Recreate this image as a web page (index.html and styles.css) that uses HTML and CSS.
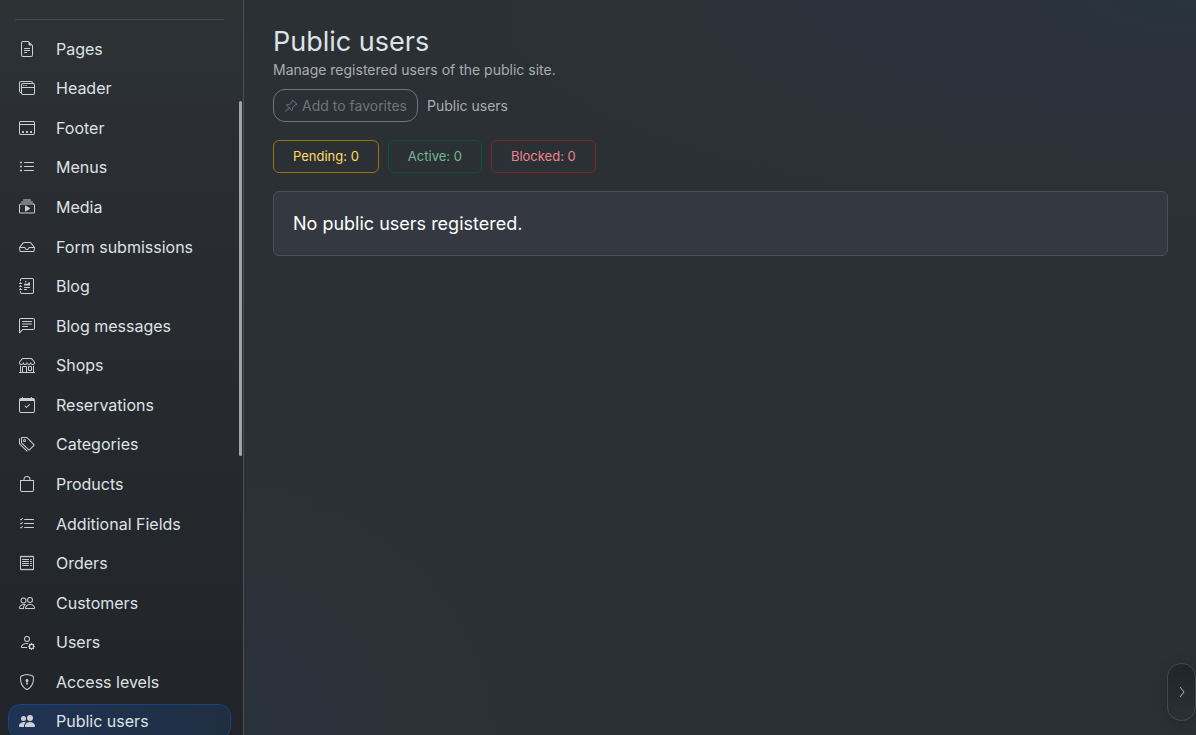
FILE: index.html
```html
<!DOCTYPE html>
<html lang="en">
<head>
    <meta charset="UTF-8">
    <meta name="viewport" content="width=device-width, initial-scale=1.0">
    <title>Public users</title>
    <link rel="stylesheet" href="styles.css">
</head>
<body>
<div class="layout">
    <aside class="sidebar">
        <hr class="sidebar__line">
        <nav class="menu">
            <a class="menu__item" href="#pages">
                <svg class="icon" viewBox="0 0 16 16"><path d="M5.5 7a.5.5 0 0 0 0 1h5a.5.5 0 0 0 0-1zM5 9.5a.5.5 0 0 1 .5-.5h5a.5.5 0 0 1 0 1h-5a.5.5 0 0 1-.5-.5m0 2a.5.5 0 0 1 .5-.5h2a.5.5 0 0 1 0 1h-2a.5.5 0 0 1-.5-.5"/><path d="M9.5 0H4a2 2 0 0 0-2 2v12a2 2 0 0 0 2 2h8a2 2 0 0 0 2-2V4.5zm0 1v2A1.5 1.5 0 0 0 11 4.5h2V14a1 1 0 0 1-1 1H4a1 1 0 0 1-1-1V2a1 1 0 0 1 1-1z"/></svg>
                <span>Pages</span>
            </a>
            <a class="menu__item" href="#header">
                <svg class="icon" viewBox="0 0 16 16"><path d="M4.5 6a.5.5 0 1 0 0-1 .5.5 0 0 0 0 1M6 6a.5.5 0 1 0 0-1 .5.5 0 0 0 0 1m2-.5a.5.5 0 1 1-1 0 .5.5 0 0 1 1 0"/><path d="M12 1a2 2 0 0 1 2 2 2 2 0 0 1 2 2v8a2 2 0 0 1-2 2H4a2 2 0 0 1-2-2 2 2 0 0 1-2-2V3a2 2 0 0 1 2-2zM2 12V5a2 2 0 0 1 2-2h9a1 1 0 0 0-1-1H2a1 1 0 0 0-1 1v8a1 1 0 0 0 1 1m1-4v5a1 1 0 0 0 1 1h10a1 1 0 0 0 1-1V8zm12-1V5a1 1 0 0 0-1-1H4a1 1 0 0 0-1 1v2z"/></svg>
                <span>Header</span>
            </a>
            <a class="menu__item" href="#footer">
                <svg class="icon" viewBox="0 0 16 16"><path d="M3.5 11a.5.5 0 0 0-.5.5v1a.5.5 0 0 0 .5.5h1a.5.5 0 0 0 .5-.5v-1a.5.5 0 0 0-.5-.5zm3.5.5a.5.5 0 0 1 .5-.5h1a.5.5 0 0 1 .5.5v1a.5.5 0 0 1-.5.5h-1a.5.5 0 0 1-.5-.5zm4.5-.5a.5.5 0 0 0-.5.5v1a.5.5 0 0 0 .5.5h1a.5.5 0 0 0 .5-.5v-1a.5.5 0 0 0-.5-.5z"/><path d="M14 1a2 2 0 0 1 2 2v10a2 2 0 0 1-2 2H2a2 2 0 0 1-2-2V3a2 2 0 0 1 2-2zM2 14h12a1 1 0 0 0 1-1V5H1v8a1 1 0 0 0 1 1M2 2a1 1 0 0 0-1 1v1h14V3a1 1 0 0 0-1-1z"/></svg>
                <span>Footer</span>
            </a>
            <a class="menu__item" href="#menus">
                <svg class="icon" viewBox="0 0 16 16"><path d="M5 11.5a.5.5 0 0 1 .5-.5h9a.5.5 0 0 1 0 1h-9a.5.5 0 0 1-.5-.5m0-4a.5.5 0 0 1 .5-.5h9a.5.5 0 0 1 0 1h-9a.5.5 0 0 1-.5-.5m0-4a.5.5 0 0 1 .5-.5h9a.5.5 0 0 1 0 1h-9a.5.5 0 0 1-.5-.5m-3 1a1 1 0 1 0 0-2 1 1 0 0 0 0 2m0 4a1 1 0 1 0 0-2 1 1 0 0 0 0 2m0 4a1 1 0 1 0 0-2 1 1 0 0 0 0 2"/></svg>
                <span>Menus</span>
            </a>
            <a class="menu__item" href="#media">
                <svg class="icon" viewBox="0 0 16 16"><path d="M2 3a.5.5 0 0 0 .5.5h11a.5.5 0 0 0 0-1h-11A.5.5 0 0 0 2 3m2-2a.5.5 0 0 0 .5.5h7a.5.5 0 0 0 0-1h-7A.5.5 0 0 0 4 1m2.765 5.576A.5.5 0 0 0 6 7v5a.5.5 0 0 0 .765.424l4-2.5a.5.5 0 0 0 0-.848z"/><path d="M1.5 14.5A1.5 1.5 0 0 1 0 13V6a1.5 1.5 0 0 1 1.5-1.5h13A1.5 1.5 0 0 1 16 6v7a1.5 1.5 0 0 1-1.5 1.5zm13-1a.5.5 0 0 0 .5-.5V6a.5.5 0 0 0-.5-.5h-13A.5.5 0 0 0 1 6v7a.5.5 0 0 0 .5.5z"/></svg>
                <span>Media</span>
            </a>
            <a class="menu__item" href="#forms">
                <svg class="icon" viewBox="0 0 16 16"><path d="M4.98 4a.5.5 0 0 0-.39.188L1.54 8H6a.5.5 0 0 1 .5.5 1.5 1.5 0 1 0 3 0A.5.5 0 0 1 10 8h4.46l-3.05-3.812A.5.5 0 0 0 11.02 4zm9.954 5H10.45a2.5 2.5 0 0 1-4.9 0H1.066l.32 2.562a.5.5 0 0 0 .497.438h12.234a.5.5 0 0 0 .496-.438zM3.809 3.563A1.5 1.5 0 0 1 4.981 3h6.038a1.5 1.5 0 0 1 1.172.563l3.7 4.625a.5.5 0 0 1 .105.374l-.39 3.124A1.5 1.5 0 0 1 14.117 13H1.883a1.5 1.5 0 0 1-1.489-1.314l-.39-3.124a.5.5 0 0 1 .106-.374z"/></svg>
                <span>Form submissions</span>
            </a>
            <a class="menu__item" href="#blog">
                <svg class="icon" viewBox="0 0 16 16"><path d="M7.5 3.75a.75.75 0 1 1-1.5 0 .75.75 0 0 1 1.5 0m-.861 1.542 1.33.886 1.854-1.855a.25.25 0 0 1 .289-.047L11 4.75V7a.5.5 0 0 1-.5.5h-5A.5.5 0 0 1 5 7v-.5s1.54-1.274 1.639-1.208M5 9.5a.5.5 0 0 1 .5-.5h5a.5.5 0 0 1 0 1h-5a.5.5 0 0 1-.5-.5m0 2a.5.5 0 0 1 .5-.5h2a.5.5 0 0 1 0 1h-2a.5.5 0 0 1-.5-.5"/><path d="M3 0h10a2 2 0 0 1 2 2v12a2 2 0 0 1-2 2H3a2 2 0 0 1-2-2v-1h1v1a1 1 0 0 0 1 1h10a1 1 0 0 0 1-1V2a1 1 0 0 0-1-1H3a1 1 0 0 0-1 1v1H1V2a2 2 0 0 1 2-2"/><path d="M1 5v-.5a.5.5 0 0 1 1 0V5h.5a.5.5 0 0 1 0 1h-2a.5.5 0 0 1 0-1zm0 3v-.5a.5.5 0 0 1 1 0V8h.5a.5.5 0 0 1 0 1h-2a.5.5 0 0 1 0-1zm0 3v-.5a.5.5 0 0 1 1 0v.5h.5a.5.5 0 0 1 0 1h-2a.5.5 0 0 1 0-1z"/></svg>
                <span>Blog</span>
            </a>
            <a class="menu__item" href="#messages">
                <svg class="icon" viewBox="0 0 16 16"><path d="M14 1a1 1 0 0 1 1 1v8a1 1 0 0 1-1 1H4.414A2 2 0 0 0 3 11.586l-2 2V2a1 1 0 0 1 1-1zM2 0a2 2 0 0 0-2 2v12.793a.5.5 0 0 0 .854.353l2.853-2.853A1 1 0 0 1 4.414 12H14a2 2 0 0 0 2-2V2a2 2 0 0 0-2-2z"/><path d="M3 3.5a.5.5 0 0 1 .5-.5h9a.5.5 0 0 1 0 1h-9a.5.5 0 0 1-.5-.5M3 6a.5.5 0 0 1 .5-.5h9a.5.5 0 0 1 0 1h-9A.5.5 0 0 1 3 6m0 2.5a.5.5 0 0 1 .5-.5h5a.5.5 0 0 1 0 1h-5a.5.5 0 0 1-.5-.5"/></svg>
                <span>Blog messages</span>
            </a>
            <a class="menu__item" href="#shops">
                <svg class="icon" viewBox="0 0 16 16"><path d="M2.97 1.35A1 1 0 0 1 3.73 1h8.54a1 1 0 0 1 .76.35l2.609 3.044A1.5 1.5 0 0 1 16 5.37v.255a2.375 2.375 0 0 1-4.25 1.458A2.37 2.37 0 0 1 9.875 8 2.37 2.37 0 0 1 8 7.083 2.37 2.37 0 0 1 6.125 8a2.37 2.37 0 0 1-1.875-.917A2.375 2.375 0 0 1 0 5.625V5.37a1.5 1.5 0 0 1 .361-.976zm1.78 4.275a1.375 1.375 0 0 0 2.75 0 .5.5 0 0 1 1 0 1.375 1.375 0 0 0 2.75 0 .5.5 0 0 1 1 0 1.375 1.375 0 1 0 2.75 0V5.37a.5.5 0 0 0-.12-.325L12.27 2H3.73L1.12 5.045A.5.5 0 0 0 1 5.37v.255a1.375 1.375 0 0 0 2.75 0 .5.5 0 0 1 1 0M1.5 8.5A.5.5 0 0 1 2 9v6h1v-5a1 1 0 0 1 1-1h3a1 1 0 0 1 1 1v5h6V9a.5.5 0 0 1 1 0v6h.5a.5.5 0 0 1 0 1H.5a.5.5 0 0 1 0-1H1V9a.5.5 0 0 1 .5-.5M4 15h3v-5H4zm5-5a1 1 0 0 1 1-1h2a1 1 0 0 1 1 1v3a1 1 0 0 1-1 1h-2a1 1 0 0 1-1-1zm3 0h-2v3h2z"/></svg>
                <span>Shops</span>
            </a>
            <a class="menu__item" href="#reservations">
                <svg class="icon" viewBox="0 0 16 16"><path d="M10.854 7.146a.5.5 0 0 1 0 .708l-3 3a.5.5 0 0 1-.708 0l-1.5-1.5a.5.5 0 1 1 .708-.708L7.5 9.793l2.646-2.647a.5.5 0 0 1 .708 0"/><path d="M3.5 0a.5.5 0 0 1 .5.5V1h8V.5a.5.5 0 0 1 1 0V1h1a2 2 0 0 1 2 2v11a2 2 0 0 1-2 2H2a2 2 0 0 1-2-2V3a2 2 0 0 1 2-2h1V.5a.5.5 0 0 1 .5-.5M1 4v10a1 1 0 0 0 1 1h12a1 1 0 0 0 1-1V4z"/></svg>
                <span>Reservations</span>
            </a>
            <a class="menu__item" href="#categories">
                <svg class="icon" viewBox="0 0 16 16"><path d="M3 2v4.586l7 7L14.586 9l-7-7zM2 2a1 1 0 0 1 1-1h4.586a1 1 0 0 1 .707.293l7 7a1 1 0 0 1 0 1.414l-4.586 4.586a1 1 0 0 1-1.414 0l-7-7A1 1 0 0 1 2 6.586z"/><path d="M5.5 5a.5.5 0 1 1 0-1 .5.5 0 0 1 0 1m0 1a1.5 1.5 0 1 0 0-3 1.5 1.5 0 0 0 0 3M1 7.086a1 1 0 0 0 .293.707L8.75 15.25l-.043.043a1 1 0 0 1-1.414 0l-7-7A1 1 0 0 1 0 7.586V3a1 1 0 0 1 1-1z"/></svg>
                <span>Categories</span>
            </a>
            <a class="menu__item" href="#products">
                <svg class="icon" viewBox="0 0 16 16"><path d="M8 1a2.5 2.5 0 0 1 2.5 2.5V4h-5v-.5A2.5 2.5 0 0 1 8 1m3.5 3v-.5a3.5 3.5 0 1 0-7 0V4H1v10a2 2 0 0 0 2 2h10a2 2 0 0 0 2-2V4zM2 5h12v9a1 1 0 0 1-1 1H3a1 1 0 0 1-1-1z"/></svg>
                <span>Products</span>
            </a>
            <a class="menu__item" href="#fields">
                <svg class="icon" viewBox="0 0 16 16"><path d="M5 11.5a.5.5 0 0 1 .5-.5h9a.5.5 0 0 1 0 1h-9a.5.5 0 0 1-.5-.5m0-4a.5.5 0 0 1 .5-.5h9a.5.5 0 0 1 0 1h-9a.5.5 0 0 1-.5-.5m0-4a.5.5 0 0 1 .5-.5h9a.5.5 0 0 1 0 1h-9a.5.5 0 0 1-.5-.5M3.854 2.146a.5.5 0 0 1 0 .708l-1.5 1.5a.5.5 0 0 1-.708 0l-.5-.5a.5.5 0 1 1 .708-.708L2 3.293l1.146-1.147a.5.5 0 0 1 .708 0m0 4a.5.5 0 0 1 0 .708l-1.5 1.5a.5.5 0 0 1-.708 0l-.5-.5a.5.5 0 1 1 .708-.708l.146.147 1.146-1.147a.5.5 0 0 1 .708 0m0 4a.5.5 0 0 1 0 .708l-1.5 1.5a.5.5 0 0 1-.708 0l-.5-.5a.5.5 0 0 1 .708-.708l.146.147 1.146-1.147a.5.5 0 0 1 .708 0"/></svg>
                <span>Additional Fields</span>
            </a>
            <a class="menu__item" href="#orders">
                <svg class="icon" viewBox="0 0 16 16"><path d="M1.92.506a.5.5 0 0 1 .434.14L3 1.293l.646-.647a.5.5 0 0 1 .708 0L5 1.293l.646-.647a.5.5 0 0 1 .708 0L7 1.293l.646-.647a.5.5 0 0 1 .708 0L9 1.293l.646-.647a.5.5 0 0 1 .708 0l.646.647.646-.647a.5.5 0 0 1 .708 0l.646.647.646-.647a.5.5 0 0 1 .801.13l.5 1A.5.5 0 0 1 15 2v12a.5.5 0 0 1-.053.224l-.5 1a.5.5 0 0 1-.8.13L13 14.707l-.646.647a.5.5 0 0 1-.708 0L11 14.707l-.646.647a.5.5 0 0 1-.708 0L9 14.707l-.646.647a.5.5 0 0 1-.708 0L7 14.707l-.646.647a.5.5 0 0 1-.708 0L5 14.707l-.646.647a.5.5 0 0 1-.708 0L3 14.707l-.646.647a.5.5 0 0 1-.801-.13l-.5-1A.5.5 0 0 1 1 14V2a.5.5 0 0 1 .053-.224l.5-1a.5.5 0 0 1 .367-.27m.217 1.338L2 2.118v11.764l.137.274.51-.51a.5.5 0 0 1 .707 0l.646.647.646-.646a.5.5 0 0 1 .708 0l.646.646.646-.646a.5.5 0 0 1 .708 0l.646.646.646-.646a.5.5 0 0 1 .708 0l.646.646.646-.646a.5.5 0 0 1 .708 0l.646.646.646-.646a.5.5 0 0 1 .708 0l.509.509.137-.274V2.118l-.137-.274-.51.51a.5.5 0 0 1-.707 0L12 1.707l-.646.647a.5.5 0 0 1-.708 0L10 1.707l-.646.647a.5.5 0 0 1-.708 0L8 1.707l-.646.647a.5.5 0 0 1-.708 0L6 1.707l-.646.647a.5.5 0 0 1-.708 0L4 1.707l-.646.647a.5.5 0 0 1-.708 0z"/><path d="M3 4.5a.5.5 0 0 1 .5-.5h6a.5.5 0 1 1 0 1h-6a.5.5 0 0 1-.5-.5m0 2a.5.5 0 0 1 .5-.5h6a.5.5 0 1 1 0 1h-6a.5.5 0 0 1-.5-.5m0 2a.5.5 0 0 1 .5-.5h6a.5.5 0 1 1 0 1h-6a.5.5 0 0 1-.5-.5m0 2a.5.5 0 0 1 .5-.5h6a.5.5 0 0 1 0 1h-6a.5.5 0 0 1-.5-.5m8-6a.5.5 0 0 1 .5-.5h1a.5.5 0 0 1 0 1h-1a.5.5 0 0 1-.5-.5m0 2a.5.5 0 0 1 .5-.5h1a.5.5 0 0 1 0 1h-1a.5.5 0 0 1-.5-.5m0 2a.5.5 0 0 1 .5-.5h1a.5.5 0 0 1 0 1h-1a.5.5 0 0 1-.5-.5m0 2a.5.5 0 0 1 .5-.5h1a.5.5 0 0 1 0 1h-1a.5.5 0 0 1-.5-.5"/></svg>
                <span>Orders</span>
            </a>
            <a class="menu__item" href="#customers">
                <svg class="icon" viewBox="0 0 16 16"><path d="M15 14s1 0 1-1-1-4-5-4-5 3-5 4 1 1 1 1zm-7.978-1L7 12.996c.001-.264.167-1.03.76-1.72C8.312 10.629 9.282 10 11 10c1.717 0 2.687.63 3.24 1.276.593.69.758 1.457.76 1.72l-.008.002-.014.002zM11 7a2 2 0 1 0 0-4 2 2 0 0 0 0 4m3-2a3 3 0 1 1-6 0 3 3 0 0 1 6 0M6.936 9.28a6 6 0 0 0-1.23-.247A7 7 0 0 0 5 9c-4 0-5 3-5 4q0 1 1 1h4.216A2.24 2.24 0 0 1 5 13c0-1.01.377-2.042 1.09-2.904.243-.294.526-.569.846-.816M4.92 10A5.5 5.5 0 0 0 4 13H1c0-.26.164-1.03.76-1.724.545-.636 1.492-1.256 3.16-1.275zM1.5 5.5a3 3 0 1 1 6 0 3 3 0 0 1-6 0m3-2a2 2 0 1 0 0 4 2 2 0 0 0 0-4"/></svg>
                <span>Customers</span>
            </a>
            <a class="menu__item" href="#users">
                <svg class="icon" viewBox="0 0 16 16"><path d="M11 5a3 3 0 1 1-6 0 3 3 0 0 1 6 0M8 7a2 2 0 1 0 0-4 2 2 0 0 0 0 4m.256 7a4.5 4.5 0 0 1-.229-1.004H3c.001-.246.154-.986.832-1.664C4.484 10.68 5.711 10 8 10q.39 0 .74.025c.226-.341.496-.65.804-.918Q8.844 9.002 8 9c-5 0-6 3-6 4s1 1 1 1zm3.63-4.54c.18-.613 1.048-.613 1.229 0l.043.148a.64.64 0 0 0 .921.382l.136-.074c.561-.306 1.175.308.87.869l-.075.136a.64.64 0 0 0 .382.92l.149.045c.612.18.612 1.048 0 1.229l-.15.043a.64.64 0 0 0-.38.921l.074.136c.305.561-.309 1.175-.87.87l-.136-.075a.64.64 0 0 0-.92.382l-.045.149c-.18.612-1.048.612-1.229 0l-.043-.15a.64.64 0 0 0-.921-.38l-.136.074c-.561.305-1.175-.309-.87-.87l.075-.136a.64.64 0 0 0-.382-.92l-.148-.045c-.613-.18-.613-1.048 0-1.229l.148-.043a.64.64 0 0 0 .382-.921l-.074-.136c-.306-.561.308-1.175.869-.87l.136.075a.64.64 0 0 0 .92-.382zM14 12.5a1.5 1.5 0 1 0-3 0 1.5 1.5 0 0 0 3 0"/></svg>
                <span>Users</span>
            </a>
            <a class="menu__item" href="#access">
                <svg class="icon" viewBox="0 0 16 16"><path d="M5.338 1.59a61 61 0 0 0-2.837.856.48.48 0 0 0-.328.39c-.554 4.157.726 7.19 2.253 9.188a10.7 10.7 0 0 0 2.287 2.233c.346.244.652.42.893.533q.18.085.293.118a1 1 0 0 0 .101.025 1 1 0 0 0 .1-.025q.114-.034.294-.118c.24-.113.547-.29.893-.533a10.7 10.7 0 0 0 2.287-2.233c1.527-1.997 2.807-5.031 2.253-9.188a.48.48 0 0 0-.328-.39c-.651-.213-1.75-.56-2.837-.855C9.552 1.29 8.531 1.067 8 1.067c-.53 0-1.552.223-2.662.524zM5.072.56C6.157.265 7.31 0 8 0s1.843.265 2.928.56c1.11.3 2.229.655 2.887.87a1.54 1.54 0 0 1 1.044 1.262c.596 4.477-.787 7.795-2.465 9.99a11.8 11.8 0 0 1-2.517 2.453 7 7 0 0 1-1.048.625c-.28.132-.581.24-.829.24s-.548-.108-.829-.24a7 7 0 0 1-1.048-.625 11.8 11.8 0 0 1-2.517-2.453C1.928 10.487.545 7.169 1.141 2.692A1.54 1.54 0 0 1 2.185 1.43 63 63 0 0 1 5.072.56"/><path d="M9.5 6.5a1.5 1.5 0 0 1-1 1.415l.385 1.99a.5.5 0 0 1-.491.595h-.788a.5.5 0 0 1-.49-.595l.384-1.99a1.5 1.5 0 1 1 2-1.415"/></svg>
                <span>Access levels</span>
            </a>
            <a class="menu__item menu__item--active" href="#public-users">
                <svg class="icon" viewBox="0 0 16 16"><path d="M7 14s-1 0-1-1 1-4 5-4 5 3 5 4-1 1-1 1zm4-6a3 3 0 1 0 0-6 3 3 0 0 0 0 6m-5.784 6A2.24 2.24 0 0 1 5 13c0-1.355.68-2.75 1.936-3.72A6.3 6.3 0 0 0 5 9c-4 0-5 3-5 4s1 1 1 1zM4.5 8a2.5 2.5 0 1 0 0-5 2.5 2.5 0 0 0 0 5"/></svg>
                <span>Public users</span>
            </a>
        </nav>
        <div class="sidebar__thumb"></div>
    </aside>
    <main class="content">
        <h1 class="content__title">Public users</h1>
        <p class="content__text">Manage registered users of the public site.</p>
        <div class="favorites">
            <button class="favorites__button" type="button">
                <svg class="icon icon--small" viewBox="0 0 16 16"><path d="M9.828.722a.5.5 0 0 1 .354.146l4.95 4.95a.5.5 0 0 1 0 .707c-.48.48-1.072.588-1.503.588-.177 0-.335-.018-.46-.039l-3.134 3.134a6 6 0 0 1 .16 1.013c.046.702-.032 1.687-.72 2.375a.5.5 0 0 1-.707 0l-2.829-2.828-3.182 3.182c-.195.195-1.219.902-1.414.707s.512-1.22.707-1.414l3.182-3.182-2.828-2.829a.5.5 0 0 1 0-.707c.688-.688 1.673-.767 2.375-.72a6 6 0 0 1 1.013.16l3.134-3.133a3 3 0 0 1-.04-.461c0-.43.108-1.022.589-1.503a.5.5 0 0 1 .353-.146m.122 2.11v.002a.5.5 0 0 1-.122.51L6.293 6.878a.5.5 0 0 1-.511.12H5.78l-.014-.004a5 5 0 0 0-.288-.076 5 5 0 0 0-.765-.116c-.422-.028-.836.008-1.175.15l5.51 5.509c.141-.34.177-.753.149-1.175a5 5 0 0 0-.192-1.054l-.004-.013v-.001a.5.5 0 0 1 .12-.512l3.536-3.535a.5.5 0 0 1 .532-.115l.096.022c.087.017.208.034.344.034q.172.002.343-.04L9.927 2.028q-.042.172-.04.343a1.8 1.8 0 0 0 .062.46z"/></svg>
                Add to favorites
            </button>
            <span class="content__text">Public users</span>
        </div>
        <div class="filters">
            <a class="filter filter--pending" href="#pending">Pending: 0</a>
            <a class="filter filter--active" href="#active">Active: 0</a>
            <a class="filter filter--blocked" href="#blocked">Blocked: 0</a>
        </div>
        <section class="card">No public users registered.</section>
    </main>
    <button class="drawer" type="button" aria-label="Open panel">
        <svg class="drawer__arrow" viewBox="0 0 6 12"><path d="M1 1l4 5-4 5"/></svg>
    </button>
</div>
</body>
</html>
```
FILE: styles.css
```css
:root {
    --textColor: #dee2e6;
    --mutedColor: #a9adb1;
    --lineColor: #495057;
}
* {
    box-sizing: border-box;
}
body {
    margin: 0;
    background: #2b3034;
    color: var(--textColor);
    font-family: Inter, sans-serif;
    font-size: 16px;
    line-height: 24px;
}

.layout {
    display: flex;
    height: 100vh;
    overflow: hidden;
    background:
        radial-gradient(ellipse 60% 30% at 100% 0%, #29343f, rgba(43, 49, 61, .9) 35%, transparent),
        radial-gradient(ellipse 26% 36% at 16% 100%, #29343d, rgba(43, 49, 59, .9) 40%, transparent),
        #2b3034;
}

.sidebar {
    position: relative;
    display: flex;
    flex-direction: column;
    flex: none;
    width: 244px;
    padding: 19px 12px 0 8px;
    border-right: 1px solid var(--lineColor);
    background: linear-gradient(#2d3235, #292c31 30%, #212529);
}

.sidebar__line {
    width: 209px;
    margin: 0 0 11px 7px;
    border: 0;
    border-top: 1px solid #43484c;
}

.sidebar__thumb {
    position: absolute;
    top: 101px;
    right: 1px;
    width: 3px;
    height: 355px;
    border-radius: 2px;
    background: #a2a3a5;
}

.menu {
    display: flex;
    flex: 1;
    flex-direction: column;
    gap: 4px;
    margin-bottom: -4px;
}

.menu__item {
    display: flex;
    flex: 1;
    align-items: center;
    gap: 21px;
    padding: 0 10px;
    border: 1px solid transparent;
    border-radius: 12px;
    color: var(--textColor);
    text-decoration: none;
}

.menu__item--active {
    border-color: #194281;
    background: linear-gradient(110deg, #203354, #202e41);
}

.icon {
    flex: none;
    width: 16px;
    height: 16px;
    fill: currentColor;
    opacity: .9;
}

.icon--small {
    width: 14px;
    height: 14px;
}

.content {
    flex: 1;
    padding: 25px 28px 0 29px;
}

.content__title {
    margin: 0;
    font-size: 27px;
    font-weight: 400;
    line-height: 34px;
}

.content__text {
    margin: 0;
    color: var(--mutedColor);
    font-size: 14px;
    line-height: 22px;
}

.favorites {
    display: flex;
    align-items: center;
    gap: 9px;
    margin-top: 8px;
}

.favorites__button {
    display: flex;
    align-items: center;
    gap: 4px;
    height: 33px;
    padding: 0 10px;
    border: 1px solid #6c757d;
    border-radius: 12px;
    background: transparent;
    color: #6c757d;
    font: 14px/22px Inter, sans-serif;
}

.filters {
    display: flex;
    gap: 9px;
    margin: 18px 0;
}

.filter {
    padding: 5px 19px;
    border: 1px solid;
    border-radius: 6px;
    font-size: 13px;
    line-height: 21px;
    text-decoration: none;
}

.filter--pending {
    border-color: #997404;
    color: #ffda6a;
}

.filter--active {
    border-color: #0f5132;
    color: #75b798;
}

.filter--blocked {
    border-color: #842029;
    color: #ea868f;
}

.card {
    padding: 18px 19px;
    border: 1px solid var(--lineColor);
    border-radius: 6px;
    background: #343941;
    color: #fff;
    font-size: 18px;
    line-height: 27px;
}

/* pull-out tab on the right edge */
.drawer {
    position: absolute;
    right: 0;
    bottom: 14px;
    display: flex;
    align-items: center;
    justify-content: center;
    width: 29px;
    height: 58px;
    padding: 0;
    border: 1px solid #434950;
    border-radius: 14px;
    background: linear-gradient(#212529, #2b3034);
    box-shadow: 0 4px 16px rgba(0, 0, 0, .15);
}

.drawer__arrow {
    width: 6px;
    height: 12px;
    fill: none;
    stroke: #adb5bd;
}
```
